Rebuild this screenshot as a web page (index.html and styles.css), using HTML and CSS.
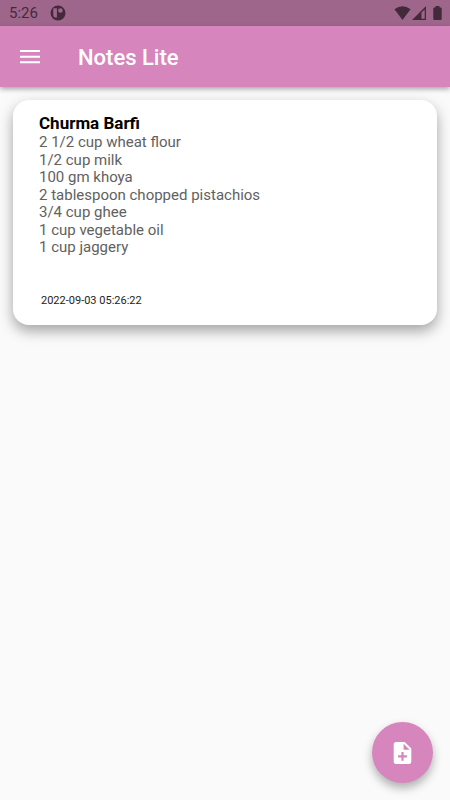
FILE: index.html
```html
<!DOCTYPE html>
<html lang="en">
<head>
<meta charset="utf-8">
<meta name="viewport" content="width=device-width, initial-scale=1">
<title>Notes Lite</title>
<link rel="stylesheet" href="styles.css">
</head>
<body>
<div class="status-bar">
  <time class="clock">5:26</time>
  <svg class="app-icon" viewBox="0 0 16 16" width="16" height="16" aria-hidden="true">
    <circle cx="8" cy="8" r="7.5" fill="#432a3b"/>
    <path d="M3.300 4q0-.7.700-.7h2.900v9.200H5.300q-2-.4-2-2.500z" fill="#9f668c"/>
    <circle cx="10.400" cy="5.500" r="2.300" fill="#9f668c"/>
  </svg>
  <div class="system-icons">
    <svg viewBox="0 0 17 14" width="17" height="14" aria-hidden="true"><path d="M8.5 14 .4 3.2Q8.5-2.6 16.6 3.2z" fill="#432a3b"/></svg>
    <svg viewBox="0 0 14 14" width="14" height="14" aria-hidden="true"><path fill-rule="evenodd" d="M14 0v14H0zM12.7 3.4 9.5 6.6v6.2h3.2z" fill="#432a3b"/></svg>
    <svg class="battery" viewBox="0 0 9 14" width="9" height="14" aria-hidden="true"><path d="M2.5 0h4v1.5h1.2q1 0 1 1V13q0 1-1 1H1.3q-1 0-1-1V2.500q0-1 1-1h1.200z" fill="#432a3b"/></svg>
  </div>
</div>
<header class="app-bar">
  <button class="menu-button" type="button" aria-label="Open menu">
    <svg viewBox="0 0 20 14" width="20" height="14" aria-hidden="true"><path d="M0 0h20v2H0zM0 5.700h20v2H0zM0 11.300h20v2H0z" fill="#fff"/></svg>
  </button>
  <h1 class="app-title">Notes Lite</h1>
</header>
<main class="notes">
  <article class="note">
    <h2 class="note-title">Churma Barfi</h2>
    <ul class="note-body">
      <li>2 1/2 cup wheat flour</li>
      <li>1/2 cup milk</li>
      <li>100 gm khoya</li>
      <li>2 tablespoon chopped pistachios</li>
      <li>3/4 cup ghee</li>
      <li>1 cup vegetable oil</li>
      <li>1 cup jaggery</li>
    </ul>
    <time class="note-date">2022-09-03 05:26:22</time>
  </article>
</main>
<button class="add-button" type="button" aria-label="Add note">
  <svg viewBox="4 2 16 20" width="19" height="22" aria-hidden="true"><path d="M14 2H6c-1.100 0-1.990.9-1.990 2L4 20c0 1.100.89 2 1.990 2H18c1.100 0 2-.9 2-2V8l-6-6zm2 14h-3v3h-2v-3H8v-2h3v-3h2v3h3v2zm-3-7V3.500L18.500 9H13z" fill="#fff"/></svg>
</button>
</body>
</html>
```
FILE: styles.css
```css
* {
  box-sizing: border-box;
}

body {
  margin: 0;
  min-height: 100vh;
  background: #fafafa;
  font-family: Roboto, sans-serif;
}

h1, h2, ul {
  margin: 0;
}

button {
  border: 0;
  padding: 0;
  cursor: pointer;
}

svg {
  display: block;
}

.status-bar {
  display: flex;
  align-items: center;
  height: 26px;
  padding: 0 8px 0 9px;
  background: #9f668c;
  color: #432a3b;
}

.clock {
  font-size: 15px;
  line-height: 26px;
}

.app-icon {
  margin-left: 12px;
}

.system-icons {
  display: flex;
  gap: 1px;
  margin-left: auto;
}

.battery {
  margin-left: 6px;
}

.app-bar {
  display: flex;
  align-items: center;
  height: 61px;
  padding: 0 20px;
  background: #d686bd;
  box-shadow: 0 2px 5px rgba(0, 0, 0, 0.35);
}

.menu-button {
  background: transparent;
}

.app-title {
  margin-left: 38px;
  padding-top: 2px;
  color: #fff;
  font-size: 22px;
  font-weight: 500;
  line-height: 28px;
}

.notes {
  padding: 13px;
}

.note {
  display: flex;
  flex-direction: column;
  min-height: 225px;
  padding: 12px 26px 16px;
  border-radius: 16px;
  background: #fff;
  box-shadow: 0 6px 14px rgba(0, 0, 0, 0.35);
}

.note-title {
  color: #000;
  font-size: 17px;
  font-weight: 700;
  line-height: 22px;
}

.note-body {
  display: flex;
  flex-direction: column;
  justify-content: space-between;
  min-height: 122px;
  padding: 0;
  color: #616161;
  font-size: 15px;
  font-weight: 400;
  line-height: 17px;
  list-style: none;
}

.note-date {
  margin-top: auto;
  padding-left: 2px;
  color: #222;
  font-size: 11px;
  line-height: 16px;
}

.add-button {
  position: fixed;
  right: 17px;
  bottom: 17px;
  display: grid;
  place-items: center;
  width: 61px;
  height: 61px;
  border-radius: 50%;
  background: #d686bd;
  box-shadow: 0 5px 10px rgba(0, 0, 0, 0.3);
}
```
